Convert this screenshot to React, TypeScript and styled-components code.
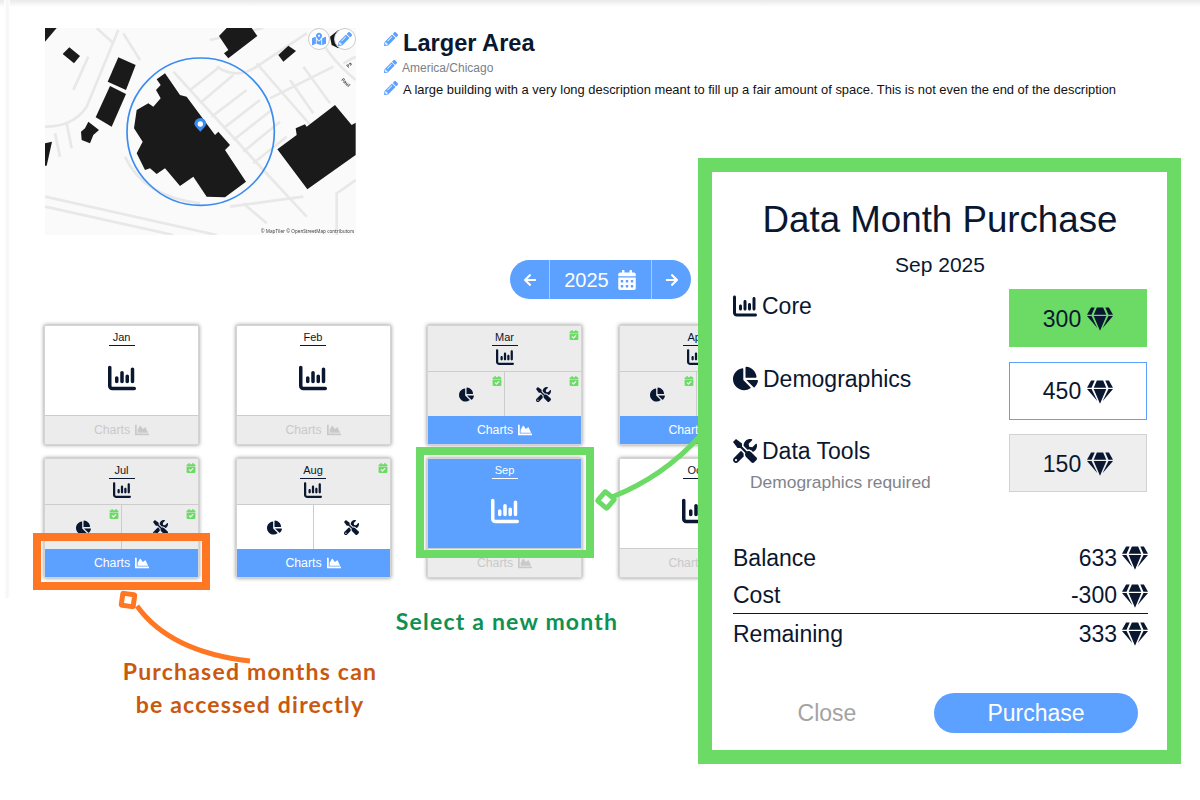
import React from 'react'
import styled, { createGlobalStyle } from 'styled-components'
import {
  FaArrowLeft, FaArrowRight, FaCalendarAlt, FaCalendarCheck, FaChartArea, FaChartPie,
  FaGem, FaMapMarkedAlt, FaPencilAlt, FaTools,
} from 'react-icons/fa'
import { FaChartColumn } from 'react-icons/fa6'

const BLUE = '#5ca1ff'
const GREEN = '#6bdb65'
const NAVY = '#0a1730'
const ORANGE = '#ff7722'

const GlobalStyle = createGlobalStyle`
  html, body { margin: 0; padding: 0; background: #fff; }
  body { width: 1200px; height: 800px; overflow: hidden; font-family: "Liberation Sans", Arial, sans-serif; color: ${NAVY}; }
`

const Page = styled.div`
  position: relative;
  width: 1200px;
  height: 800px;
  overflow: hidden;
  background: #fff;
`
const Sheet = styled.div`
  position: relative;
  height: 598px;
  &::before {
    content: '';
    position: absolute;
    left: 4px;
    top: 0;
    bottom: 0;
    width: 6px;
    background: linear-gradient(90deg, #fff, #f5f5f5 60%, #fff);
  }
`
const TopShade = styled.div`
  height: 7px;
  background: linear-gradient(#e9e9e9, #fff);
`
const Header = styled.header`
  position: relative;
  display: flex;
  gap: 28px;
  padding: 21px 0 0 45px;
`
const MapBox = styled.div`
  position: relative;
  flex: none;
  width: 311px;
  height: 207px;
  background: #fafafa;
  overflow: hidden;
`
const MapButton = styled.button<{ $right: number }>`
  position: absolute;
  top: 0;
  right: ${(p) => p.$right}px;
  width: 22px;
  height: 22px;
  padding: 0;
  display: flex;
  align-items: center;
  justify-content: center;
  border-radius: 50%;
  border: 1px solid #ccc;
  background: #fff;
  color: ${BLUE};
  font-size: 14px;
`
const Info = styled.div`
  display: flex;
  flex-direction: column;
`
const InfoRow = styled.div<{ $h: number; $lift: number }>`
  display: flex;
  align-items: center;
  height: ${(p) => p.$h}px;
  gap: 5px;
  color: ${BLUE};
  font-size: 13px;
  svg { flex: none; margin-bottom: ${(p) => p.$lift}px; }
`
const Title = styled.h1`
  margin: 0;
  font-size: 23.6px;
  font-weight: 700;
  color: ${NAVY};
`
const Zone = styled.span`
  font-size: 12px;
  color: #7b7f87;
`
const Description = styled.span`
  font-size: 12.93px;
  color: #111;
`
const YearRow = styled.div`
  position: relative;
  display: flex;
  margin: 25px 0 0 510px;
`
const YearPicker = styled.div`
  display: flex;
  height: 39px;
  width: 181px;
  border-radius: 20px;
  background: ${BLUE};
  color: #fff;
  overflow: hidden;
`
const YearArrow = styled.button`
  flex: none;
  width: 39px;
  padding: 0;
  border: none;
  background: none;
  color: #fff;
  font-size: 14px;
  display: flex;
  align-items: center;
  justify-content: center;
`
const YearValue = styled.div`
  flex: 1;
  display: flex;
  align-items: center;
  justify-content: center;
  gap: 8px;
  font-size: 20px;
  padding-top: 1px;
  border-left: 1px solid #a5cbff;
  border-right: 1px solid #a5cbff;
`
const MonthGrid = styled.div`
  position: relative;
  display: grid;
  grid-template-columns: repeat(4, 155px);
  column-gap: 36.5px;
  row-gap: 13px;
  padding: 26px 0 0 44px;
`
const Card = styled.div`
  position: relative;
  display: flex;
  flex-direction: column;
  height: 120px;
  box-sizing: border-box;
  border: 1px solid #d4d4d4;
  box-shadow: 0 0 4px rgba(0, 0, 0, 0.45);
  background: #fff;
`
const Core = styled.div<{ $state: 'open' | 'owned' | 'picked'; $tall: boolean }>`
  position: relative;
  flex: ${(p) => (p.$tall ? 1 : 'none')};
  height: ${(p) => (p.$tall ? 'auto' : '46px')};
  box-sizing: border-box;
  display: flex;
  flex-direction: column;
  align-items: center;
  background: ${(p) => (p.$state === 'owned' ? '#ececec' : p.$state === 'picked' ? BLUE : '#fff')};
  color: ${(p) => (p.$state === 'picked' ? '#fff' : NAVY)};
  border-bottom: 1px solid #ccc;
  padding-top: 4px;
`
const MonthName = styled.div`
  width: 26px;
  display: flex;
  justify-content: center;
  white-space: nowrap;
  font-size: 11px;
  line-height: 14px;
  padding-bottom: 1px;
  border-bottom: 1px solid currentColor;
`
const CoreIcon = styled.div<{ $tall: boolean }>`
  display: flex;
  font-size: ${(p) => (p.$tall ? 28 : 18)}px;
  margin-top: ${(p) => (p.$tall ? 18 : 2)}px;
`
const Cells = styled.div`
  display: flex;
  height: 44px;
`
const Cell = styled.div<{ $owned: boolean }>`
  position: relative;
  flex: 1;
  display: flex;
  align-items: center;
  justify-content: center;
  font-size: 15px;
  color: ${NAVY};
  background: ${(p) => (p.$owned ? '#ececec' : '#fff')};
  & + & { border-left: 1px solid #ccc; }
`
const Badge = styled.span`
  position: absolute;
  top: 4px;
  right: 2px;
  display: flex;
  font-size: 10px;
  color: ${GREEN};
`
const Charts = styled.div<{ $on: boolean }>`
  height: 28px;
  flex: none;
  display: flex;
  align-items: center;
  justify-content: center;
  gap: 5px;
  font-size: 12.3px;
  background: ${(p) => (p.$on ? BLUE : '#ececec')};
  color: ${(p) => (p.$on ? '#fff' : '#c9c9c9')};
  svg { font-size: 14px; }
`
const Frame = styled.div<{ $color: string; $x: number; $y: number; $w: number; $h: number }>`
  position: absolute;
  left: ${(p) => p.$x}px;
  top: ${(p) => p.$y}px;
  width: ${(p) => p.$w}px;
  height: ${(p) => p.$h}px;
  box-sizing: border-box;
  border: 8px solid ${(p) => p.$color};
`
const Connector = styled.svg`
  position: absolute;
  inset: 0;
  width: 1200px;
  height: 800px;
  pointer-events: none;
`
const Note = styled.div<{ $color: string; $x: number; $y: number; $w: number }>`
  position: absolute;
  left: ${(p) => p.$x}px;
  top: ${(p) => p.$y}px;
  width: ${(p) => p.$w}px;
  text-align: center;
  font-family: Lato, sans-serif;
  font-weight: 700;
  font-size: 23px;
  line-height: 33px;
  letter-spacing: 1.2px;
  color: ${(p) => p.$color};
`
const Modal = styled.section`
  position: absolute;
  left: 698px;
  top: 158px;
  width: 483px;
  height: 606px;
  box-sizing: border-box;
  border: 14.5px solid ${GREEN};
  background: #fff;
  padding: 28px 20px 0 21px;
  display: flex;
  flex-direction: column;
`
const ModalTitle = styled.h2`
  margin: 0;
  text-align: center;
  font-size: 36.7px;
  line-height: 40px;
  font-weight: 400;
  white-space: nowrap;
`
const ModalMonth = styled.div`
  margin-top: 12px;
  text-align: center;
  font-size: 21px;
  line-height: 26px;
`
const Tiers = styled.div`
  margin-top: 11px;
  display: flex;
  flex-direction: column;
  gap: 14.5px;
`
const Tier = styled.div`
  display: flex;
  justify-content: space-between;
`
const TierName = styled.div`
  display: flex;
  align-items: center;
  align-self: flex-start;
  gap: 5px;
  font-size: 23px;
  line-height: 34px;
`
const TierNote = styled.div`
  margin: 4px 0 0 17px;
  font-size: 17.4px;
  line-height: 20px;
  color: #80848c;
`
const PriceBox = styled.div<{ $kind: 'chosen' | 'open' | 'locked' }>`
  flex: none;
  width: 138px;
  height: 58px;
  box-sizing: border-box;
  padding-top: 2px;
  display: flex;
  align-items: center;
  justify-content: center;
  gap: 6px;
  font-size: 23px;
  background: ${(p) => (p.$kind === 'chosen' ? GREEN : p.$kind === 'locked' ? '#eeeeee' : '#fff')};
  border: 1px solid ${(p) => (p.$kind === 'open' ? BLUE : p.$kind === 'locked' ? '#d2d2d2' : GREEN)};
`
const Summary = styled.div`
  margin-top: 48px;
  margin-right: -1px;
  display: flex;
  flex-direction: column;
  gap: 2px;
`
const SummaryRow = styled.div<{ $rule?: boolean }>`
  display: flex;
  justify-content: space-between;
  align-items: center;
  height: 36px;
  font-size: 23px;
  box-sizing: border-box;
  border-bottom: ${(p) => (p.$rule ? `1px solid ${NAVY}` : 'none')};
`
const Amount = styled.div`
  display: flex;
  align-items: center;
  gap: 5px;
`
const ModalActions = styled.div`
  margin-top: 41px;
  display: flex;
  align-items: center;
`
const CloseButton = styled.button`
  width: 188px;
  height: 40px;
  margin-right: 13px;
  border: none;
  background: none;
  font: inherit;
  font-size: 23px;
  color: #a3a3a3;
`
const PurchaseButton = styled.button`
  width: 204px;
  height: 40px;
  border: none;
  border-radius: 20px;
  background: ${BLUE};
  color: #fff;
  font: inherit;
  font-size: 23px;
`

type CoreState = 'open' | 'owned' | 'picked'
interface Month {
  name: string
  core: CoreState
  badge?: boolean
  pie?: 'bought' | 'open'
  charts: boolean
}

const months: Month[] = [
  { name: 'Jan', core: 'open', charts: false },
  { name: 'Feb', core: 'open', charts: false },
  { name: 'Mar', core: 'owned', badge: true, pie: 'bought', charts: true },
  { name: 'Apr', core: 'owned', badge: true, pie: 'bought', charts: true },
  { name: 'Jul', core: 'owned', badge: true, pie: 'bought', charts: true },
  { name: 'Aug', core: 'owned', badge: true, pie: 'open', charts: true },
  { name: 'Sep', core: 'picked', charts: false },
  { name: 'Oct', core: 'open', charts: false },
]

function MonthCard({ month }: { month: Month }) {
  const tall = !month.pie
  const bought = month.pie === 'bought'
  return (
    <Card>
      <Core $state={month.core} $tall={tall}>
        <MonthName>{month.name}</MonthName>
        <CoreIcon $tall={tall}><FaChartColumn /></CoreIcon>
        {month.badge && <Badge><FaCalendarCheck /></Badge>}
      </Core>
      {month.pie && (
        <Cells>
          <Cell $owned={bought}>
            <FaChartPie />
            {bought && <Badge><FaCalendarCheck /></Badge>}
          </Cell>
          <Cell $owned={bought}>
            <FaTools />
            {bought && <Badge><FaCalendarCheck /></Badge>}
          </Cell>
        </Cells>
      )}
      <Charts $on={month.charts}>Charts <FaChartArea /></Charts>
    </Card>
  )
}

// map traced in 3x coordinates, the viewBox offsets it back to the box
const buildings = [
  '45,84 80,84 45,125',
  '118,142 150,168 132,190 98,162',
  '265,172 317,195 288,270 233,245',
  '240,258 288,282 245,380 197,352',
  '175,365 207,390 190,405 180,430 155,420 153,395 165,385',
  '45,430 66,425 50,497 45,497',
  '567,108 590,84 665,84 682,108 595,175 582,160 595,150',
  '775,137 798,153 760,185 745,165',
  '915,315 965,375 977,368 977,465 832,568 742,448 800,405 797,385 825,373 830,380',
  '900,110 925,90 950,120 925,145 905,135',
  '405,220 450,285 470,290 555,405 565,395 600,435 585,450 648,545 585,592 530,590 490,530 450,558 405,505 380,522 360,505 345,510 320,460 338,425 312,385 320,330 355,310 370,320 392,295 378,270 392,255 380,238',
]
const roads = [
  'M45 380 Q130 380 170 320 L265 90', 'M200 84 L250 130', 'M280 100 L330 180', 'M130 270 L175 170',
  'M45 590 L560 705', 'M45 620 L430 705', 'M110 370 L125 445', 'M75 400 L90 470',
  'M430 215 L700 510', 'M540 120 L700 84', 'M560 200 Q620 240 680 200 L830 100',
  'M480 270 L570 200', 'M510 310 L610 225', 'M545 350 L650 270', 'M580 385 L690 300', 'M610 420 L725 330', 'M640 455 L750 365', 'M670 490 L770 410',
  'M680 190 L880 420', 'M780 240 L850 340', 'M820 200 L900 310', 'M720 295 L910 200', 'M860 84 Q880 160 977 240', 'M940 190 L977 170',
  'M600 620 L820 590', 'M700 510 L830 650', 'M640 610 L710 670', 'M920 705 L920 580 L977 540', 'M285 470 Q340 590 510 610',
]

function MapView() {
  return (
    <svg width="311" height="207" viewBox="45 84 933 621" style={{ filter: 'blur(0.4px)' }}>
      <g fill="none" stroke="#e8e8e8" strokeWidth="8">
        {roads.map((d) => <path key={d} d={d} />)}
      </g>
      {buildings.map((p) => <polygon key={p} points={p} fill="#1a1a1a" />)}
      <circle cx="512" cy="395" r="221" fill="none" stroke="#3b8cf0" strokeWidth="5" />
      <path d="M511 395 Q493 377 493 372 A18 18 0 1 1 529 372 Q529 377 511 395Z" fill="#3b8cf0" />
      <circle cx="511" cy="372" r="8" fill="#fff" />
      <text x="973" y="700" textAnchor="end" fontSize="14" fill="#444" fontFamily="Noto Sans, sans-serif">© MapTiler © OpenStreetMap contributors</text>
      <text x="955" y="204" fontSize="14" fontWeight="700" fill="#444" fontFamily="Noto Sans, sans-serif" transform="rotate(-45 955 204)">Pa</text>
      <text x="933" y="240" fontSize="14" fontWeight="700" fill="#444" fontFamily="Noto Sans, sans-serif" transform="rotate(45 933 240)">Paul</text>
    </svg>
  )
}

export default function App() {
  return (
    <Page>
      <GlobalStyle />
      <Sheet>
        <TopShade />
        <Header>
          <MapBox>
            <MapView />
            <MapButton $right={26}><FaMapMarkedAlt /></MapButton>
            <MapButton $right={0}><FaPencilAlt /></MapButton>
          </MapBox>
          <Info>
            <InfoRow $h={30} $lift={8}><FaPencilAlt size={14} /><Title>Larger Area</Title></InfoRow>
            <InfoRow $h={20} $lift={4}><FaPencilAlt size={13} /><Zone>America/Chicago</Zone></InfoRow>
            <InfoRow $h={23} $lift={4}><FaPencilAlt size={14} /><Description>A large building with a very long description meant to fill up a fair amount of space. This is not even the end of the description</Description></InfoRow>
          </Info>
        </Header>
        <YearRow>
          <YearPicker>
            <YearArrow><FaArrowLeft /></YearArrow>
            <YearValue>2025 <FaCalendarAlt size={20} /></YearValue>
            <YearArrow><FaArrowRight /></YearArrow>
          </YearPicker>
        </YearRow>
        <MonthGrid>
          {months.map((m) => <MonthCard key={m.name} month={m} />)}
        </MonthGrid>
      </Sheet>

      <Connector viewBox="0 0 1200 800">
        <path d="M137 606 Q170 652 250 661" fill="none" stroke={ORANGE} strokeWidth="5" />
        <rect x="122" y="594" width="12" height="12" rx="1" fill="#fff" stroke={ORANGE} strokeWidth="5" transform="rotate(8 128 600)" />
        <path d="M612 497 Q663 477 700 436" fill="none" stroke={GREEN} strokeWidth="5" />
        <rect x="600" y="494" width="12" height="12" rx="1" fill="#fff" stroke={GREEN} strokeWidth="5" transform="rotate(40 606 500)" />
      </Connector>
      <Frame $color={ORANGE} $x={33} $y={533} $w={177} $h={57} />
      <Frame $color={GREEN} $x={416} $y={447} $w={178} $h={111} />
      <Note $color="#0f9152" $x={380} $y={605} $w={254}>Select a new month</Note>
      <Note $color="#c9590f" $x={90} $y={655} $w={320}>Purchased months can<br />be accessed directly</Note>

      <Modal>
        <ModalTitle>Data Month Purchase</ModalTitle>
        <ModalMonth>Sep 2025</ModalMonth>
        <Tiers>
          <Tier>
            <TierName><FaChartColumn size={24} />Core</TierName>
            <PriceBox $kind="chosen">300 <FaGem size={26} /></PriceBox>
          </Tier>
          <Tier>
            <TierName><FaChartPie size={25} />Demographics</TierName>
            <PriceBox $kind="open">450 <FaGem size={26} /></PriceBox>
          </Tier>
          <Tier>
            <div>
              <TierName><FaTools size={24} />Data Tools</TierName>
              <TierNote>Demographics required</TierNote>
            </div>
            <PriceBox $kind="locked">150 <FaGem size={26} /></PriceBox>
          </Tier>
        </Tiers>
        <Summary>
          <SummaryRow>Balance<Amount>633 <FaGem size={26} /></Amount></SummaryRow>
          <SummaryRow $rule>Cost<Amount>-300 <FaGem size={26} /></Amount></SummaryRow>
          <SummaryRow>Remaining<Amount>333 <FaGem size={26} /></Amount></SummaryRow>
        </Summary>
        <ModalActions>
          <CloseButton>Close</CloseButton>
          <PurchaseButton>Purchase</PurchaseButton>
        </ModalActions>
      </Modal>
    </Page>
  )
}
